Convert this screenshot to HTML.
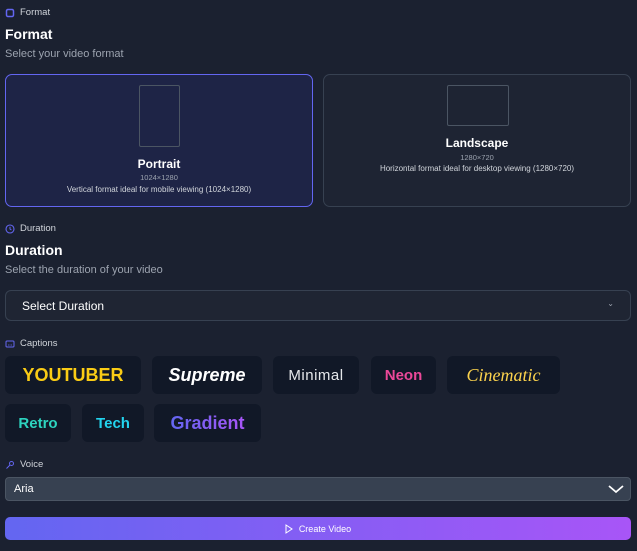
<!DOCTYPE html>
<html><head><style>
*{margin:0;padding:0;box-sizing:border-box}
body{width:637px;height:551px;background:#1b2130;font-family:"Liberation Sans",sans-serif;color:#fff;position:relative;overflow:hidden}
.a{position:absolute}
.lbl{font-size:9.5px;color:#d1d5db;display:flex;align-items:center;gap:5px}
.h{font-size:14px;font-weight:bold}
.sub{font-size:11px;color:#9ca3af}
.card{border-radius:7px;text-align:center}
.chip{background:#111827;border-radius:6px;display:flex;align-items:center;justify-content:center}
</style></head><body>
<div class="a lbl" style="left:5px;top:7px"><svg width="10" height="10" viewBox="0 0 10 10"><rect x="1.5" y="1.5" width="7" height="7" rx="1.5" fill="none" stroke="#6366f1" stroke-width="1.5"/></svg>Format</div>
<div class="a h" style="left:5px;top:26px">Format</div>
<div class="a sub" style="left:5px;top:48px">Select your video format</div>
<div class="a card" style="left:5px;top:74px;width:308px;height:133px;background:#1e2446;border:1px solid #6366f1">
<div class="a" style="left:133px;top:10px;width:41px;height:62px;border:1px solid #4b5563;border-radius:2px"></div>
<div class="a" style="left:0;right:0;top:82px;font-size:12px;font-weight:bold">Portrait</div>
<div class="a" style="left:0;right:0;top:98px;font-size:7.5px;color:#9ca3af">1024×1280</div>
<div class="a" style="left:0;right:0;top:110px;font-size:8px;color:#d1d5db">Vertical format ideal for mobile viewing (1024×1280)</div>
</div>
<div class="a card" style="left:323px;top:74px;width:308px;height:133px;background:#1e2433;border:1px solid #374151">
<div class="a" style="left:123px;top:10px;width:62px;height:41px;border:1px solid #4b5563;border-radius:2px"></div>
<div class="a" style="left:0;right:0;top:61px;font-size:12px;font-weight:bold">Landscape</div>
<div class="a" style="left:0;right:0;top:78px;font-size:7.5px;color:#9ca3af">1280×720</div>
<div class="a" style="left:0;right:0;top:89px;font-size:8px;color:#d1d5db">Horizontal format ideal for desktop viewing (1280×720)</div>
</div>
<div class="a lbl" style="left:5px;top:223px"><svg width="10" height="10" viewBox="0 0 10 10"><circle cx="5" cy="5" r="4" fill="none" stroke="#6366f1" stroke-width="1.1"/><path d="M5 2.8V5l1.4 1" fill="none" stroke="#6366f1" stroke-width="1"/></svg>Duration</div>
<div class="a h" style="left:5px;top:242px">Duration</div>
<div class="a sub" style="left:5px;top:264px">Select the duration of your video</div>
<div class="a" style="left:5px;top:290px;width:626px;height:31px;background:#1f2533;border:1px solid #374151;border-radius:6px;font-size:12px;padding:8px 0 0 16px">Select Duration<span class="a" style="right:16px;top:8px;font-size:8px;color:#9ca3af">⌄</span></div>
<div class="a lbl" style="left:5px;top:338px"><svg width="10" height="10" viewBox="0 0 10 10"><rect x="1" y="2" width="8" height="6" rx="1" fill="none" stroke="#6366f1" stroke-width="1"/><path d="M3 6h1.5M5.5 6H7" stroke="#6366f1" stroke-width="0.8"/></svg>Captions</div>
<div class="a chip" style="left:5px;top:356px;width:136px;height:38px;color:#facc15;font-weight:bold;font-size:18px">YOUTUBER</div>
<div class="a chip" style="left:152px;top:356px;width:110px;height:38px;font-weight:bold;font-style:italic;font-size:18px">Supreme</div>
<div class="a chip" style="left:273px;top:356px;width:86px;height:38px;font-size:15px;color:#e5e7eb;letter-spacing:.5px">Minimal</div>
<div class="a chip" style="left:371px;top:356px;width:65px;height:38px;font-size:15px;font-weight:bold;color:#ec4899">Neon</div>
<div class="a chip" style="left:447px;top:356px;width:113px;height:38px;font-family:'Liberation Serif',serif;font-style:italic;font-size:18px;color:#fcd34d">Cinematic</div>
<div class="a chip" style="left:5px;top:404px;width:66px;height:38px;font-size:15px;font-weight:bold;color:#2dd4bf">Retro</div>
<div class="a chip" style="left:82px;top:404px;width:62px;height:38px;font-size:15px;font-weight:bold;color:#22d3ee">Tech</div>
<div class="a chip" style="left:154px;top:404px;width:107px;height:38px;font-size:18px;font-weight:bold"><span style="background:linear-gradient(90deg,#6366f1,#a855f7);-webkit-background-clip:text;background-clip:text;color:transparent">Gradient</span></div>
<div class="a lbl" style="left:5px;top:459px"><svg width="10" height="10" viewBox="0 0 10 10"><circle cx="6.5" cy="3.5" r="2" fill="none" stroke="#6366f1" stroke-width="1"/><path d="M5 5L1.5 8.5" stroke="#6366f1" stroke-width="1"/></svg>Voice</div>
<div class="a" style="left:5px;top:477px;width:626px;height:24px;background:#374151;border:1px solid #4b5563;border-radius:4px;font-size:11px;padding:5px 0 0 8px">Aria<svg class="a" style="right:6px;top:5px" width="16" height="12" viewBox="0 0 16 12"><path d="M1 3l7 6 7-6" fill="none" stroke="#fff" stroke-width="1.8"/></svg></div>
<div class="a" style="left:5px;top:517px;width:626px;height:23px;border-radius:5px;background:linear-gradient(90deg,#6366f1,#a855f7);font-size:9px;display:flex;align-items:center;justify-content:center;gap:6px"><svg width="8" height="10" viewBox="0 0 8 10"><path d="M1 1l6 4-6 4z" fill="none" stroke="#fff" stroke-width="1"/></svg>Create Video</div>
</body></html>
